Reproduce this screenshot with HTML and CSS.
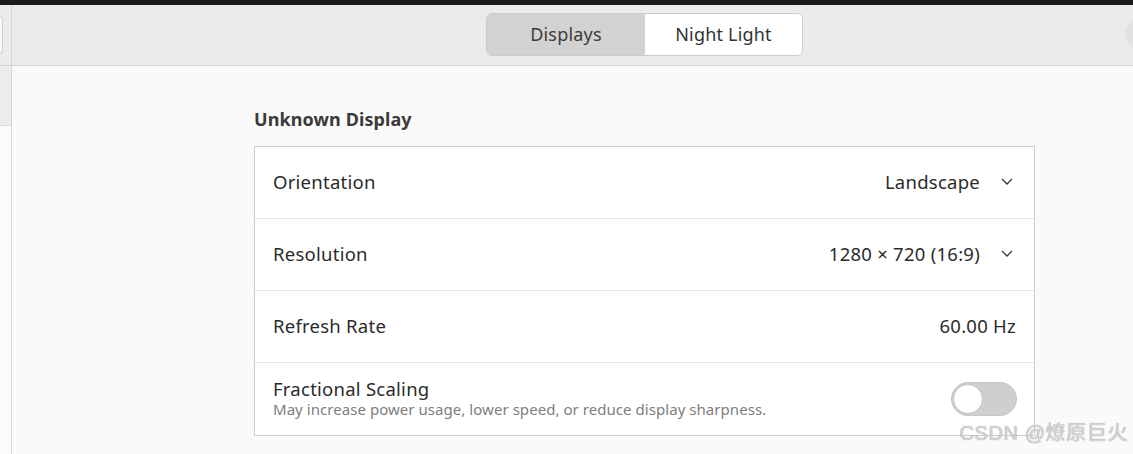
FILE: index.html
```html
<!DOCTYPE html>
<html>
<head>
<meta charset="utf-8">
<link rel="stylesheet" href="styles.css">
</head>
<body>
<div class="window">
  <div class="strip"></div>
  <div class="headerbar">
    <div class="hb-side"><div class="hb-btn"></div></div>
    <div class="hb-main">
      <div class="segmented">
        <div class="seg seg-active">Displays</div>
        <div class="seg">Night Light</div>
      </div>
      <div class="hb-circle"></div>
    </div>
  </div>
  <div class="body">
    <aside class="sidebar">
      <div class="side-row side-sel"></div>
    </aside>
    <main class="content">
      <h2 class="title">Unknown Display</h2>
      <div class="list">
        <div class="row">
          <span class="label">Orientation</span>
          <span class="value">Landscape<svg class="chev" width="12" height="7" viewBox="0 0 12 7"><path d="M1 1 L6 6 L11 1" fill="none" stroke="#3a3a3a" stroke-width="1.4"/></svg></span>
        </div>
        <div class="row">
          <span class="label">Resolution</span>
          <span class="value">1280 × 720 (16:9)<svg class="chev" width="12" height="7" viewBox="0 0 12 7"><path d="M1 1 L6 6 L11 1" fill="none" stroke="#3a3a3a" stroke-width="1.4"/></svg></span>
        </div>
        <div class="row">
          <span class="label">Refresh Rate</span>
          <span class="value">60.00 Hz</span>
        </div>
        <div class="row">
          <div class="label-group">
            <span class="label">Fractional Scaling</span>
            <span class="sub">May increase power usage, lower speed, or reduce display sharpness.</span>
          </div>
          <div class="switch"><div class="knob"></div></div>
        </div>
      </div>
    </main>
  </div>
  <div class="watermark">CSDN @燎原巨火</div>
</div>
</body>
</html>
```
FILE: styles.css
```css
html, body {
  margin: 0;
  padding: 0;
}
body {
  width: 1133px;
  height: 454px;
  overflow: hidden;
  background: #fafafa;
  font-family: "Noto Sans", "Open Sans", sans-serif;
  color: #2f2f2f;
}
.window {
  position: relative;
  height: 454px;
}
.strip {
  height: 5px;
  background: #1b1b1b;
}
.headerbar {
  display: flex;
  height: 60px;
  background: #ebebeb;
  border-bottom: 1px solid #d4d4d4;
}
.hb-side {
  width: 11px;
  border-right: 1px solid #d6d6d6;
  display: flex;
  align-items: center;
  overflow: hidden;
}
.hb-btn {
  width: 3px;
  height: 36px;
  margin-left: -1px;
  background: #f7f7f7;
  border: 1px solid #d0d0d0;
  border-left: none;
  border-radius: 0 5px 5px 0;
}
.hb-main {
  flex: 1;
  display: flex;
  align-items: center;
  padding-left: 474px;
  overflow: hidden;
}
.segmented {
  display: flex;
  height: 41px;
  border: 1px solid #cbcbcb;
  border-radius: 6px;
  overflow: hidden;
  margin-top: -2px;
}
.seg {
  width: 157px;
  display: flex;
  align-items: center;
  justify-content: center;
  font-size: 18px;
  letter-spacing: 0.2px;
  color: #333;
  background: #ffffff;
}
.seg-active {
  width: 158px;
  background: #d2d2d2;
  color: #3c3c3c;
}
.hb-circle {
  margin-left: auto;
  margin-right: -26px;
  width: 34px;
  height: 34px;
  border-radius: 50%;
  background: #e2e2e2;
  margin-top: -2px;
}
.body {
  display: flex;
  height: 388px;
}
.sidebar {
  width: 11px;
  border-right: 1px solid #d6d6d6;
  background: #fbfbfb;
}
.side-row {
  height: 59px;
  border-bottom: 1px solid #dcdcdc;
}
.side-sel {
  background: #ececec;
}
.content {
  flex: 1;
  padding: 42px 0 0 242px;
}
.title {
  margin: 0 0 16px 0;
  font-size: 18px;
  font-weight: 700;
  line-height: 22px;
  letter-spacing: 0.1px;
  color: #3a3a3a;
}
.list {
  width: 779px;
  border: 1px solid #cdcdcd;
  background: #ffffff;
}
.row {
  height: 71px;
  display: flex;
  align-items: center;
  justify-content: space-between;
  padding: 0 18px 2px 18px;
  box-sizing: border-box;
  height: 72px;
  border-bottom: 1px solid #e6e6e6;
}
.row:last-child {
  border-bottom: none;
  height: 72px;
  padding-bottom: 0;
}
.label {
  font-size: 18.5px;
  letter-spacing: 0.25px;
  color: #2b2b2b;
}
.value {
  display: flex;
  align-items: center;
  font-size: 18.5px;
  letter-spacing: 0.25px;
  color: #2b2b2b;
}
.chev {
  margin-left: 21px;
  margin-right: 3px;
}
.label-group {
  display: flex;
  flex-direction: column;
  margin-top: -2px;
}
.label-group .label {
  line-height: 22px;
}
.sub {
  font-size: 15px;
  letter-spacing: 0.05px;
  color: #7e7e7e;
  line-height: 19px;
}
.switch {
  width: 64px;
  height: 32px;
  border-radius: 17px;
  background: #cfcfcf;
  border: 1px solid #c6c6c6;
  display: flex;
  align-items: center;
  margin-right: -1px;
}
.knob {
  width: 30px;
  height: 30px;
  border-radius: 50%;
  background: #ffffff;
  border: 1px solid #c2c2c2;
  box-sizing: border-box;
  margin-left: 1px;
}
.watermark {
  position: absolute;
  right: 5px;
  bottom: 8px;
  font-family: "Liberation Sans", "Noto Sans CJK SC", sans-serif;
  font-size: 20px;
  letter-spacing: 0.6px;
  color: #d4d4d4;
  text-shadow: 0 0 1px #8f8f8f;
}
```
